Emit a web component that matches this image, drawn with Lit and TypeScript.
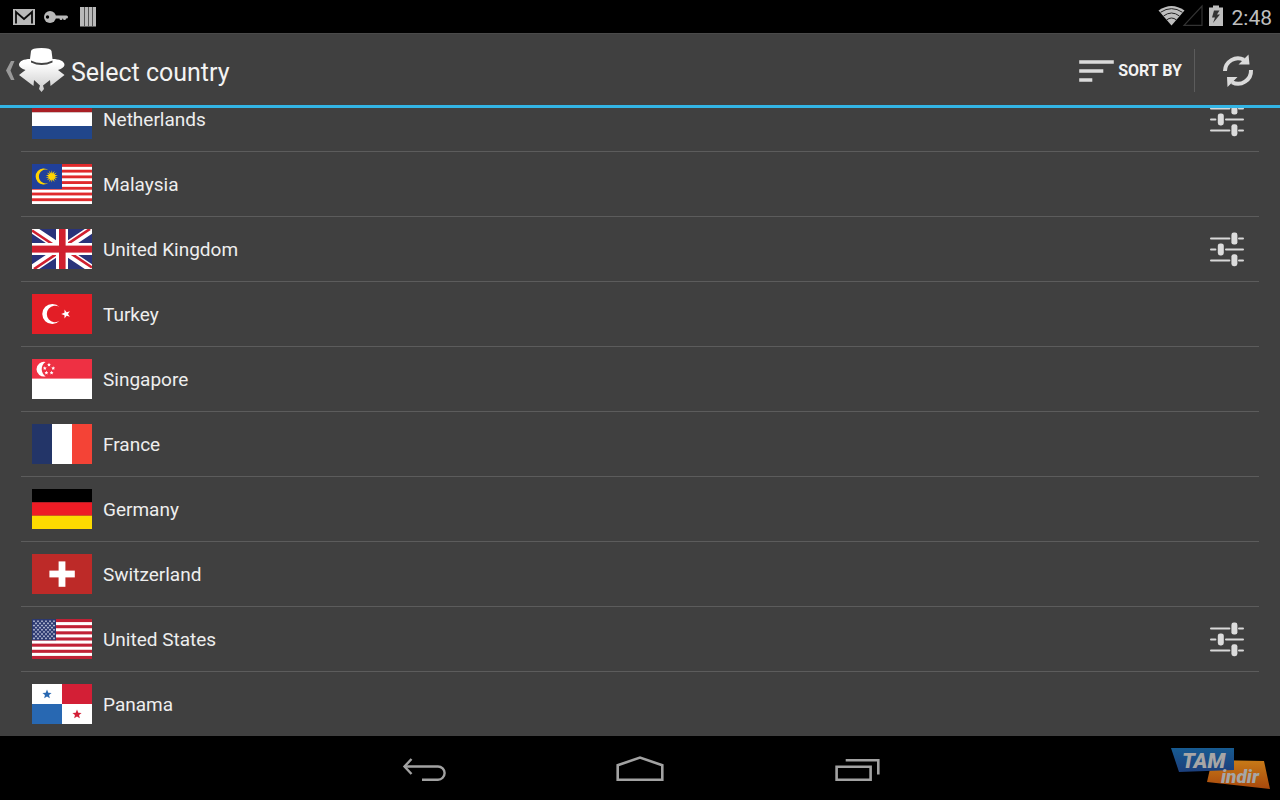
import { LitElement, html, css, svg, nothing } from "lit";
import { customElement } from "lit/decorators.js";

const star = (cx: number, cy: number, r: number, fill: string, points = 5, inner = 0.4, turn = -90) => {
  const pts: string[] = [];
  for (let i = 0; i < points * 2; i++) {
    const a = ((turn + (i * 180) / points) * Math.PI) / 180;
    const d = i % 2 ? r * inner : r;
    pts.push(`${(cx + d * Math.cos(a)).toFixed(2)},${(cy + d * Math.sin(a)).toFixed(2)}`);
  }
  return svg`<polygon points=${pts.join(" ")} fill=${fill} />`;
};

const box = (x: number, y: number, w: number, h: number, fill: string) =>
  svg`<rect x=${x} y=${y} width=${w} height=${h} fill=${fill} />`;

const stripes = (count: number, color: string) =>
  Array.from({ length: Math.ceil(count / 2) }, (_, i) =>
    box(0, (i * 80) / count, 60, 40 / count, color));

const usStars = () => {
  const out = [];
  for (let row = 0; row < 9; row++) {
    const n = row % 2 ? 5 : 6;
    for (let i = 0; i < n; i++) {
      out.push(star((row % 2 ? 4 : 2) + i * 4, 2.2 + row * 2.15, 1.3, "#c8cde0", 5, 0.5));
    }
  }
  return out;
};

const flags: Record<string, unknown> = {
  nl: [box(0, 0, 60, 13.5, "#a81e24"), box(0, 13.3, 60, 13.7, "#fff"), box(0, 27, 60, 13, "#21468b")],
  my: [
    box(0, 0, 60, 40, "#fff"),
    stripes(14, "#e02a2c"),
    box(0, 0, 30, 25, "#20409a"),
    svg`<path d="M16.6 6.2A8 8 0 1 0 16.6 18.8A6.9 6.9 0 1 1 16.6 6.2Z" fill="#ffd400" />`,
    star(19.8, 12.4, 6.2, "#ffd400", 14, 0.5),
  ],
  gb: [
    box(0, 0, 60, 40, "#29337a"),
    svg`<path d="M0 0L60 40M60 0L0 40" stroke="#fff" stroke-width="8" />
      <path d="M0 1.5L27.8 20M60 38.5L32.2 20M58 0L29 19.4M2 40L31 20.6" stroke="#d0202f" stroke-width="2.7" />`,
    box(24, 0, 12, 40, "#fff"),
    box(0, 14, 60, 12, "#fff"),
    box(27, 0, 6.6, 40, "#d0202f"),
    box(0, 16.6, 60, 7, "#d0202f"),
  ],
  tr: [
    box(0, 0, 60, 40, "#e31e26"),
    svg`<path d="M27.6 13.2A10 10 0 1 0 27.6 26.8A8.2 8.2 0 1 1 27.6 13.2Z" fill="#fff" />`,
    star(34, 20, 4.8, "#fff", 5, 0.4, 180),
  ],
  sg: [
    box(0, 0, 60, 40, "#fff"),
    box(0, 0, 60, 19.6, "#ee3043"),
    svg`<path d="M13.6 3A7.4 7.4 0 1 0 13.6 17.4A8.6 8.6 0 0 1 13.6 3Z" fill="#fff" />`,
    [[17, 5.8], [12.8, 9.2], [21.2, 9.2], [14.4, 13.8], [19.6, 13.8]].map(([x, y]) => star(x, y, 2, "#fff", 5, 0.5)),
  ],
  fr: [box(0, 0, 20, 40, "#233568"), box(20, 0, 20, 40, "#fff"), box(40, 0, 20, 40, "#f44336")],
  de: [box(0, 0, 60, 13.4, "#000"), box(0, 13.3, 60, 13.4, "#ee1c25"), box(0, 26.7, 60, 13.3, "#fddb00")],
  ch: [box(0, 0, 60, 40, "#bd2a28"), box(17.4, 16.6, 25.4, 6.8, "#fff"), box(26.6, 7.4, 6.8, 25.4, "#fff")],
  us: [box(0, 0, 60, 40, "#fff"), stripes(13, "#c02136"), box(0, 0, 24, 21.3, "#2b3870"), usStars()],
  pa: [
    box(0, 0, 60, 40, "#fff"),
    box(30, 0, 30, 20, "#d31f36"),
    box(0, 20, 30, 20, "#2868b2"),
    star(15, 10.4, 4.8, "#2868b2", 5, 0.45),
    star(45, 30.4, 4.8, "#d31f36", 5, 0.45),
  ],
};

interface Country { name: string; flag: string; regions?: boolean; }

const countries: Country[] = [
  { name: "Netherlands", flag: "nl", regions: true },
  { name: "Malaysia", flag: "my" },
  { name: "United Kingdom", flag: "gb", regions: true },
  { name: "Turkey", flag: "tr" },
  { name: "Singapore", flag: "sg" },
  { name: "France", flag: "fr" },
  { name: "Germany", flag: "de" },
  { name: "Switzerland", flag: "ch" },
  { name: "United States", flag: "us", regions: true },
  { name: "Panama", flag: "pa" },
];

@customElement("country-row")
class CountryRow extends LitElement {
  static properties = { country: { attribute: false } };
  declare country: Country;

  static styles = css`
    :host { display: flex; align-items: center; height: 64px; padding: 0 10px 0 11px; }
    .flag { width: 60px; height: 40px; flex: none; display: block; }
    .name { flex: 1; padding-top: 2px; margin-left: 11px; font-size: 19px; line-height: 24px; color: #eeeeee; }
    .tune { border: 0; padding: 0; background: none; display: block; width: 42px; height: 40px; }
    .tune svg { display: block; }
  `;

  render() {
    const { name, flag, regions } = this.country;
    return html`
      <svg class="flag" viewBox="0 0 60 40" aria-hidden="true">${flags[flag]}</svg>
      <span class="name">${name}</span>
      ${regions
        ? html`<button class="tune" aria-label="Choose region in ${name}">
            <svg width="42" height="40" viewBox="0 0 42 40">
              <path d="M4 9.6H22.4M32 9.6H36M4 20.4H8.4M19 20.4H36M4 31.4H22.4M32 31.4H36"
                stroke="#d8d8d8" stroke-width="2" stroke-linecap="round" />
              <rect x="24.4" y="3.6" width="6" height="12" rx="2.4" fill="#dcdcdc" />
              <rect x="10.8" y="14.4" width="6" height="12" rx="2.4" fill="#dcdcdc" />
              <rect x="24.4" y="25.2" width="6" height="12" rx="2.4" fill="#dcdcdc" />
            </svg>
          </button>`
        : nothing}
    `;
  }
}

@customElement("app-root")
class AppRoot extends LitElement {
  static styles = css`
    :host {
      display: flex; flex-direction: column; height: 100vh; overflow: hidden;
      background: #404040; color: #f3f3f3; font-family: Roboto, "Noto Sans", sans-serif;
    }
    svg { display: block; flex: none; }
    button { border: 0; padding: 0; background: none; color: inherit; font: inherit; }
    .status { flex: none; height: 33px; background: #000; display: flex; justify-content: space-between; }
    .signals { display: flex; align-items: center; }
    .clock { font-size: 21px; line-height: 32px; color: #bebebe; margin: 3px 8px 0 7px; }
    .bar {
      flex: none; box-sizing: border-box; height: 75px; display: flex; align-items: center;
      border-top: 1px solid #4a4a4a; border-bottom: 3px solid #33b5e5; padding-top: 2px;
    }
    .up { display: flex; align-items: center; }
    h1 { margin: 0; flex: 1; font-size: 25px; line-height: 32px; font-weight: 400; padding: 4px 0 0 3px; }
    .sort { display: flex; align-items: center; gap: 4px; padding: 0 12px; font-size: 16px; font-weight: 700; line-height: 24px; }
    .rule { width: 1px; height: 43px; background: #5c5c5c; }
    .refresh { width: 85px; display: flex; justify-content: center; }
    .viewport { flex: 1; min-height: 0; overflow: hidden; display: flex; flex-direction: column; justify-content: flex-end; }
    ul { list-style: none; margin: 0 21px; padding: 0; flex: none; }
    li + li { border-top: 1px solid #5c5c5c; }
    .nav { position: relative; flex: none; height: 64px; background: #000; display: flex; justify-content: center; }
    .nav button { width: 216px; display: flex; align-items: center; justify-content: center; }
    .badge { position: absolute; right: 8px; top: 10px; }
    .mark { font-family: Roboto, sans-serif; font-weight: 900; font-style: italic; fill: #a6a6a6; }
  `;

  render() {
    return html`
      <div class="status">
        <svg width="110" height="33" viewBox="0 0 110 33" aria-hidden="true">
          <rect x="13" y="9" width="22" height="16" fill="#b9b9b9" />
          <path d="M16 23.500V12L24 19L32 12V23.500" fill="none" stroke="#0a0a0a" stroke-width="1.800" />
          <circle cx="50" cy="17" r="6" fill="#b9b9b9" />
          <path d="M55 17H66.500M61 17V18.500M64.500 17V18.500" stroke="#b9b9b9" stroke-width="3" stroke-linecap="round" />
          <circle cx="47.500" cy="17" r="1.700" fill="#000" />
          <path d="M80 7H96V26.500H80Z" fill="#b9b9b9" />
          <path d="M84.500 7V26.500M88.500 7V26.500M92.500 7V26.500" stroke="#555" stroke-width="1" />
        </svg>
        <div class="signals">
          <svg width="68" height="33" viewBox="1157 0 68 33" aria-hidden="true">
            <path d="M1171.500 25.500L1158.500 10.500Q1171.500 1.500 1184.500 10.500Z" fill="#bebebe" />
            <path d="M1160.500 12.300Q1171.500 5 1182.500 12.300M1163.500 16Q1171.500 10 1179.500 16M1166.500 20Q1171.500 16 1176.500 20"
              fill="none" stroke="#222" stroke-width="1" />
            <path d="M1184 25.400H1202V6Z" fill="none" stroke="#333" stroke-width="1.200" />
            <path d="M1209 7.500H1213V5.500H1219V7.500H1223V26H1209Z" fill="#bebebe" />
            <path d="M1214 10.500H1219.500L1217 14.500H1220L1213 23L1215 17.500H1212Z" fill="#333" />
          </svg>
          <span class="clock">2:48</span>
        </div>
      </div>

      <header class="bar">
        <button class="up" aria-label="Navigate up">
          <svg width="68" height="62" viewBox="0 40 68 62">
            <defs>
              <linearGradient id="hat" x1="0" y1="0" x2="0" y2="1">
                <stop offset="0.350" stop-color="#fff" /><stop offset="1" stop-color="#c9c9c9" />
              </linearGradient>
            </defs>
            <path d="M11 61H14.500L10.500 70.500L14.500 80H11L6 70.500Z" fill="#999" />
            <path d="M19 65C19 61 24 59 30 59L31 51Q31.500 48 41.500 48Q51 48 51.500 51L52.500 59C59 59 64.500 61 64.500 65
              Q64 68 58 70L64.500 75L50.500 86L50 80L43 85.500L44 89L41.500 92L39 89L40 85.500L34 80L33.500 86L19 75L25.500 70Q19.500 68 19 65Z"
              fill="url(#hat)" />
            <path d="M31 60.500Q41.500 65.500 52.500 60.500V62.500Q41.500 67.500 31 62.500Z" fill="#444" />
          </svg>
        </button>
        <h1>Select country</h1>
        <button class="sort">
          <svg width="36" height="24" viewBox="0 0 36 24" aria-hidden="true">
            <path d="M3 3H34M3 12H23.500M3 21H12.500" stroke="#dadada" stroke-width="3.600" stroke-linecap="square" />
          </svg>
          SORT BY
        </button>
        <div class="rule"></div>
        <button class="refresh" aria-label="Refresh">
          <svg width="34" height="36" viewBox="1221 53 34 36">
            <path d="M1225 71A13 13 0 0 1 1244 59.800M1251 70A13 13 0 0 1 1232 82.200" fill="none" stroke="#dadada" stroke-width="4" />
            <path d="M1238.500 64.500L1248.500 54.500L1249.500 64.500ZM1237.500 77L1227 77L1227.500 87Z" fill="#dadada" />
          </svg>
        </button>
      </header>

      <main class="viewport">
        <ul>
          ${countries.map((c) => html`<li><country-row .country=${c}></country-row></li>`)}
        </ul>
      </main>

      <nav class="nav">
        <button aria-label="Back">
          <svg width="44" height="28" viewBox="402 754 44 28" fill="none" stroke="#a2a2a2" stroke-width="2.400">
            <path d="M404 766.500H438A6.500 6.500 0 0 1 438 779.700H422" />
            <path d="M411.500 759L404.500 766.500L411.500 774" />
          </svg>
        </button>
        <button aria-label="Home">
          <svg width="50" height="28" viewBox="615 754 50 28" fill="none" stroke="#a2a2a2" stroke-width="2.600">
            <path d="M617.700 779.700V765.200L640 757.600L662.300 765.200V779.700Z" />
          </svg>
        </button>
        <button aria-label="Recent apps">
          <svg width="48" height="28" viewBox="832 754 48 28" fill="none" stroke="#a2a2a2" stroke-width="2.600">
            <path d="M836.600 766.700H870.600V779.700H836.600ZM845.700 760.300H878.300V774.500" />
          </svg>
        </button>
        <svg class="badge" width="102" height="46" viewBox="1170 746 102 46" role="img" aria-label="TAM indir">
          <defs>
            <linearGradient id="blue" x1="0" y1="0" x2="0" y2="1">
              <stop offset="0" stop-color="#175b91" /><stop offset="1" stop-color="#1c3f7c" />
            </linearGradient>
            <linearGradient id="orange" x1="0" y1="0" x2="0" y2="1">
              <stop offset="0" stop-color="#c87b18" /><stop offset="1" stop-color="#a9480c" />
            </linearGradient>
          </defs>
          <path d="M1212 760L1264 761L1270 789L1207 782Z" fill="url(#orange)" />
          <path d="M1171 748H1234V770L1179 772Z" fill="url(#blue)" />
          <text class="mark" x="1182" y="768" font-size="21">TAM</text>
          <text class="mark" x="1221" y="783" font-size="19">indir</text>
        </svg>
      </nav>
    `;
  }
}
